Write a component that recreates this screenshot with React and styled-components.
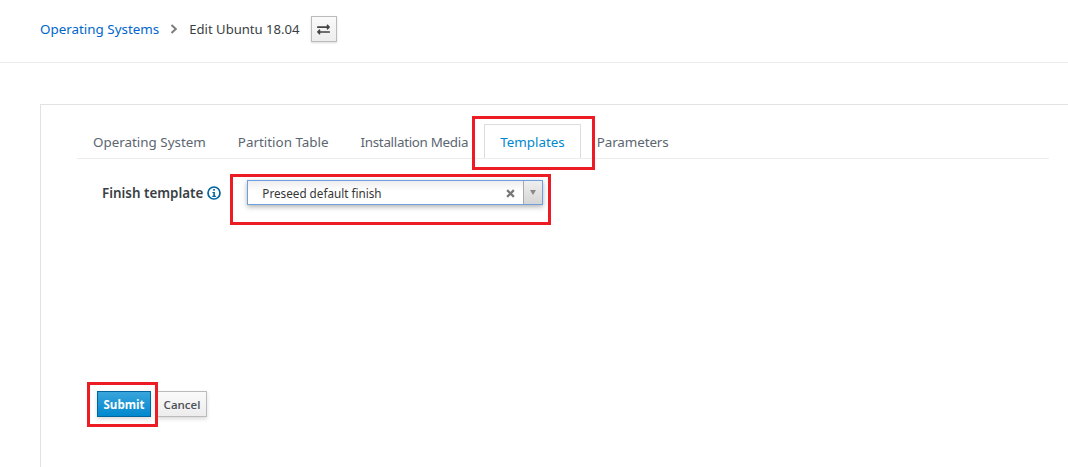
import React from 'react';
import styled, { createGlobalStyle } from 'styled-components';
import { FaExchangeAlt } from 'react-icons/fa';

const GlobalStyle = createGlobalStyle`
  html, body {
    margin: 0;
    padding: 0;
    background: #fff;
    overflow: hidden;
  }
  body {
    font-family: "Noto Sans", "Open Sans", sans-serif;
    color: #393f44;
  }
`;

const Page = styled.div`
  width: 1068px;
  height: 467px;
  overflow: hidden;
`;

const Header = styled.header`
  height: 63px;
  border-bottom: 1px solid #ededed;
  display: flex;
  align-items: center;
  padding: 0 0 4px 40px;
  box-sizing: border-box;
  font-size: 13.4px;
`;

const Crumb = styled.a`
  color: #0066cc;
  text-decoration: none;
`;

const Separator = styled.svg`
  width: 8px;
  height: 10px;
  margin: 0 11px 0 11px;
`;

const Current = styled.span`
  color: #393f44;
  font-size: 13.1px;
`;

const SwitchButton = styled.button`
  width: 26px;
  height: 26px;
  margin-left: 11px;
  padding: 0;
  display: flex;
  align-items: center;
  justify-content: center;
  color: #444;
  background: linear-gradient(#fafafa, #ededed);
  border: 1px solid #bbb;
  box-shadow: 0 1px 2px rgba(0, 0, 0, 0.15);
`;

const Card = styled.main`
  margin: 41px 0 0 40px;
  height: 400px;
  border: 1px solid #e2e2e2;
  border-right: none;
  padding: 19px 19px 0 36px;
  box-sizing: border-box;
  display: flex;
  flex-direction: column;
`;

const TabBar = styled.nav`
  display: flex;
  height: 35px;
  border-bottom: 1px solid #ededed;
  box-sizing: border-box;
  font-size: 13.4px;
`;

const Tab = styled.div`
  height: 34px;
  box-sizing: border-box;
  padding: 1px 15px 0;
  display: flex;
  align-items: center;
  white-space: nowrap;
  letter-spacing: ${(p) => p.$spacing || 0}px;
  color: ${(p) => (p.$active ? '#0088ce' : '#5b6670')};
  border: 1px solid ${(p) => (p.$active ? '#ddd' : 'transparent')};
  border-bottom: none;
`;

const FormRow = styled.div`
  display: flex;
  align-items: center;
  margin-top: 21px;
  height: 26px;
`;

const FieldLabel = styled.label`
  display: flex;
  align-items: center;
  margin-left: 25px;
  font-size: 13.4px;
  font-weight: 600;
  color: #393f44;
`;

const InfoIcon = styled.svg`
  width: 14px;
  height: 14px;
  margin-left: 4px;
`;

const SelectBox = styled.div`
  width: 296px;
  height: 25px;
  margin: -1px 0 0 26px;
  display: flex;
  align-items: center;
  box-sizing: border-box;
  border: 1px solid #6f9fdc;
  background: linear-gradient(#eeeeee, #fff 45%);
  box-shadow: 0 2px 5px rgba(0, 0, 0, 0.3);
`;

const SelectValue = styled.span`
  flex: 1;
  padding: 1px 0 0 14px;
  font-size: 11.7px;
  color: #363636;
`;

const ClearMark = styled.svg`
  width: 9px;
  height: 9px;
  margin: 1px 8px 0 0;
`;

const Arrow = styled.div`
  width: 18px;
  height: 100%;
  display: flex;
  align-items: center;
  justify-content: center;
  border-left: 1px solid #aaa;
  background: linear-gradient(#efefef, #d5d5d5);
`;

const ArrowHead = styled.div`
  width: 0;
  height: 0;
  border-left: 3.5px solid transparent;
  border-right: 3.5px solid transparent;
  border-top: 5px solid #888;
`;

const Actions = styled.div`
  display: flex;
  gap: 6px;
  margin: 185px 0 0 20px;
`;

const Button = styled.button`
  height: 26px;
  padding: 0;
  width: ${(p) => p.$width}px;
  box-sizing: border-box;
  font-family: "Open Sans", sans-serif;
  font-size: 11.5px;
  font-weight: ${(p) => (p.$primary ? 700 : 600)};
  color: ${(p) => (p.$primary ? '#fff' : '#4d5258')};
  background: ${(p) => (p.$primary ? 'linear-gradient(#39a5dc, #0088ce)' : 'linear-gradient(#fafafa, #ededed)')};
  border: 1px solid ${(p) => (p.$primary ? '#00659c' : '#bbb')};
  box-shadow: 0 2px 4px rgba(0, 0, 0, 0.15);
`;

// red annotation boxes drawn over the screenshot
const Callout = styled.div`
  position: absolute;
  left: ${(p) => p.$x}px;
  top: ${(p) => p.$y}px;
  width: ${(p) => p.$w}px;
  height: ${(p) => p.$h}px;
  box-sizing: border-box;
  border: 3px solid #ed1c24;
  pointer-events: none;
`;

export default function App() {
  return (
    <Page>
      <GlobalStyle />
      <Header>
        <Crumb href="#">Operating Systems</Crumb>
        <Separator viewBox="0 0 8 10">
          <path d="M1.5 1 L5.8 5 L1.5 9" fill="none" stroke="#7d7d7d" strokeWidth="2" />
        </Separator>
        <Current>Edit Ubuntu 18.04</Current>
        <SwitchButton>
          <FaExchangeAlt size={13} />
        </SwitchButton>
      </Header>

      <Card>
        <TabBar>
          <Tab>Operating System</Tab>
          <Tab>Partition Table</Tab>
          <Tab $spacing={-0.3}>Installation Media</Tab>
          <Tab $active>Templates</Tab>
          <Tab $spacing={-0.1}>Parameters</Tab>
        </TabBar>

        <FormRow>
          <FieldLabel>
            Finish template
            <InfoIcon viewBox="0 0 14 14">
              <circle cx="7" cy="7" r="6" fill="none" stroke="#00659c" strokeWidth="1.7" />
              <rect x="6.2" y="3" width="1.7" height="1.7" fill="#00659c" />
              <path d="M5.4 6 H7.9 V9.8 H8.9 V10.9 H5.3 V9.8 H6.3 V7.1 H5.4 Z" fill="#00659c" />
            </InfoIcon>
          </FieldLabel>
          <SelectBox>
            <SelectValue>Preseed default finish</SelectValue>
            <ClearMark viewBox="0 0 8 8">
              <path d="M1 1 L7 7 M7 1 L1 7" stroke="#777" strokeWidth="2" />
            </ClearMark>
            <Arrow>
              <ArrowHead />
            </Arrow>
          </SelectBox>
        </FormRow>

        <Actions>
          <Button $primary $width={54}>Submit</Button>
          <Button $width={50}>Cancel</Button>
        </Actions>
      </Card>

      <Callout $x={472} $y={116} $w={123} $h={54} />
      <Callout $x={230} $y={174} $w={321} $h={51} />
      <Callout $x={87} $y={382} $w={71} $h={45} />
    </Page>
  );
}
